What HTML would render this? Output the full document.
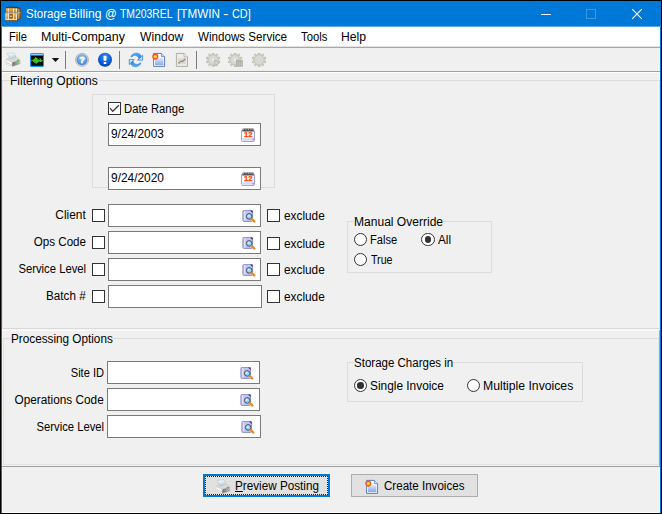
<!DOCTYPE html>
<html><head><meta charset="utf-8"><title>Storage Billing</title>
<style>
*{box-sizing:border-box;margin:0;padding:0}
html,body{width:662px;height:514px;overflow:hidden;background:#000}
body{font-family:"Liberation Sans",sans-serif;font-size:12px;color:#000;position:relative}
.a{position:absolute}
.t{position:absolute;white-space:nowrap;line-height:16px;height:16px;transform-origin:0 0}
.t.r{transform-origin:100% 0}
#win{left:1px;top:1px;width:660px;height:512px;background:#f0f0f0;border-left:1px solid #0078d7;border-right:1px solid #0078d7}
#title{left:1px;top:1px;width:660px;height:26px;background:#0078d7;border-bottom:1px solid #59a7e5}
#menu{left:2px;top:27px;width:658px;height:20px;background:#fff}
.inp{position:absolute;background:#fff;border:1px solid #7a7a7a;height:23px;width:153px}
.cb{position:absolute;width:13px;height:13px;border:1px solid #333;background:#fff}
.rb{position:absolute;width:13.6px;height:13.6px;border:1px solid #333;background:#fff;border-radius:50%}
.rb.on::after{content:"";position:absolute;left:2.6px;top:2.6px;width:6.4px;height:6.4px;border-radius:50%;background:#333}
.gb{position:absolute;border:1px solid #dcdcdc}
.btn{position:absolute;height:23px;background:#e1e1e1;border:1px solid #adadad}
/*FIT*/
#tt1{left:25.97px!important;top:6px!important;transform:scaleX(0.9586)}
#tt2{left:69.32px!important;top:6px!important;transform:scaleX(1.0131)}
#tt3{left:105.40px!important;top:6px!important;transform:scaleX(0.9674)}
#tt4{left:119.80px!important;top:6px!important;transform:scaleX(0.8661)}
#tt5{left:176.63px!important;top:6px!important;transform:scaleX(0.9746)}
#tt6{left:222.89px!important;top:6px!important;transform:scaleX(1.3973)}
#tt7{left:232.27px!important;top:6px!important;transform:scaleX(0.9077)}
#m1{left:8.89px!important;top:29px!important;transform:scaleX(0.9261)}
#m2{left:40.79px!important;top:29px!important;transform:scaleX(1.0396)}
#m3{left:139.90px!important;top:29px!important;transform:scaleX(1.0109)}
#m4{left:198.20px!important;top:29px!important;transform:scaleX(0.9678)}
#m5{left:301.20px!important;top:29px!important;transform:scaleX(0.9388)}
#m6{left:341.12px!important;top:29px!important;transform:scaleX(1.0145)}
#fo{left:9.72px!important;top:73px!important;transform:scaleX(1.0056)}
#dr{left:124.18px!important;top:101px!important;transform:scaleX(0.9397)}
#d1{left:110.61px!important;top:126px!important;transform:scaleX(0.9898)}
#d2{left:110.61px!important;top:170px!important;transform:scaleX(0.9927)}
#l1{right:576.59px!important;top:207px!important;transform:scaleX(0.9902)}
#l2{right:575.83px!important;top:234px!important;transform:scaleX(0.9676)}
#l3{right:576.13px!important;top:261px!important;transform:scaleX(0.9380)}
#l4{right:576.57px!important;top:288px!important;transform:scaleX(0.9747)}
#e1{left:284.23px!important;top:208px!important;transform:scaleX(0.9842)}
#e2{left:284.23px!important;top:236px!important;transform:scaleX(0.9842)}
#e3{left:284.23px!important;top:262px!important;transform:scaleX(0.9842)}
#e4{left:284.23px!important;top:289px!important;transform:scaleX(0.9842)}
#mo{left:354.13px!important;top:214px!important;transform:scaleX(1.0036)}
#rf{left:369.90px!important;top:232px!important;transform:scaleX(0.9240)}
#ra{left:437.90px!important;top:232px!important;transform:scaleX(0.9814)}
#rt{left:371.40px!important;top:252px!important;transform:scaleX(0.8860)}
#po{left:10.95px!important;top:331px!important;transform:scaleX(0.9783)}
#p1{right:558.13px!important;top:365px!important;transform:scaleX(0.9239)}
#p2{right:557.83px!important;top:392px!important;transform:scaleX(0.9841)}
#p3{right:558.04px!important;top:419px!important;transform:scaleX(0.9366)}
#sc{left:354.17px!important;top:355px!important;transform:scaleX(0.9601)}
#si{left:369.85px!important;top:378px!important;transform:scaleX(0.9892)}
#mi{left:482.91px!important;top:378px!important;transform:scaleX(1.0174)}
#b1{left:235.10px!important;top:478px!important;transform:scaleX(0.9757)}
#b2{left:384.03px!important;top:478px!important;transform:scaleX(0.9648)}
/*ENDFIT*/
</style></head><body>
<div class="a" id="win"></div>
<div class="a" style="left:2px;top:27px;width:2px;height:485px;background:#f5f2ef"></div>
<div class="a" style="left:658px;top:27px;width:2px;height:485px;background:#f5f2ef"></div>
<div class="a" style="left:2px;top:512px;width:658px;height:1px;background:#fdfdfd"></div>
<div class="a" id="title"></div>
<div class="t" id="tt1" style="left:26.7px;top:6px;color:#fff">Storage</div> <div class="t" id="tt2" style="left:70.2px;top:6px;color:#fff">Billing</div> <div class="t" id="tt3" style="left:104.8px;top:6px;color:#fff">@</div> <div class="t" id="tt4" style="left:120.2px;top:6px;color:#fff">TM203REL</div> <div class="t" id="tt5" style="left:177.3px;top:6px;color:#fff">[TMWIN</div> <div class="t" id="tt6" style="left:225.6px;top:6px;color:#fff">-</div> <div class="t" id="tt7" style="left:235.3px;top:6px;color:#fff">CD]</div>

<!-- shared svg defs -->
<svg width="0" height="0" style="position:absolute">
<defs>
<linearGradient id="gPaper" x1="0" y1="0" x2="0.3" y2="1"><stop offset="0.15" stop-color="#ffffff"/><stop offset="1" stop-color="#9ed0f4"/></linearGradient>
<linearGradient id="gPrR" x1="0" y1="0" x2="1" y2="0"><stop offset="0" stop-color="#6c6c6c"/><stop offset="1" stop-color="#c6c6c6"/></linearGradient>
<linearGradient id="gGold" x1="0" y1="0" x2="0" y2="1"><stop offset="0" stop-color="#f0c46a"/><stop offset="1" stop-color="#b87318"/></linearGradient>
<linearGradient id="gGold2" x1="0" y1="0" x2="0" y2="1"><stop offset="0" stop-color="#c88a2a"/><stop offset="1" stop-color="#8a5410"/></linearGradient>
<radialGradient id="gHelp" cx="0.5" cy="0.25" r="0.8"><stop offset="0" stop-color="#9fd0ff"/><stop offset="1" stop-color="#2f7fe0"/></radialGradient>
<radialGradient id="gInfo" cx="0.5" cy="0.3" r="0.75"><stop offset="0" stop-color="#3f92f6"/><stop offset="0.6" stop-color="#0a5ad2"/><stop offset="1" stop-color="#0642ae"/></radialGradient>
<linearGradient id="gDoc" x1="0" y1="0" x2="0" y2="1"><stop offset="0" stop-color="#dfe9fb"/><stop offset="1" stop-color="#86a6e6"/></linearGradient>
<linearGradient id="gRef" x1="0" y1="0" x2="0" y2="1"><stop offset="0" stop-color="#58b0ff"/><stop offset="1" stop-color="#1a72dc"/></linearGradient>
<g id="printer">
 <path d="M3.3 5.5 L9.8 4.8 L12.1 9 L6 11.2 Z" fill="url(#gPaper)" stroke="#bfbdac" stroke-width="0.6"/>
 <path d="M2 11.4 L5.2 9.9 L5.9 11.2 L12 9.1 L12.4 9.3 L16.3 11.7 L8.3 14.5 Z" fill="#dadada" stroke="#c4c1b0" stroke-width="0.5"/>
 <path d="M2 11.4 L8.3 14.5 L8.3 18.3 L2 16.4 Z" fill="#f6f6f6" stroke="#cfccbc" stroke-width="0.5"/>
 <path d="M2.5 14.3 L7.8 16.5 L7.8 17.3 L2.5 15.2 Z" fill="#c9c9c9"/>
 <path d="M8.3 14.5 L16.3 11.7 L16.3 15.5 L8.3 18.3 Z" fill="url(#gPrR)"/>
 <path d="M8.3 18.3 L16.3 15.5" stroke="#8a8a8a" stroke-width="0.6"/>
 <ellipse cx="13.9" cy="12.5" rx="1.2" ry="0.8" fill="#3fc41c"/>
</g>
<g id="search">
 <rect x="0.9" y="0.4" width="9.7" height="11" rx="1.2" fill="#c4c3ee" stroke="#8f8dd2" stroke-width="1"/>
 <path d="M2.7 1.2 V10.6" stroke="#e6e6fa" stroke-width="1"/>
 <path d="M8 0.4 H10 Q10.6 0.4 10.6 1.6 V3 Z" fill="#2c2c7c"/>
 <circle cx="7.2" cy="6.4" r="2.8" fill="#86daf8" stroke="#4c4c55" stroke-width="1"/>
 <circle cx="6.7" cy="5.8" r="1" fill="#d6f4ff"/>
 <path d="M9.7 9 L12.3 11.5" stroke="#ee8622" stroke-width="2.4" stroke-linecap="round"/>
</g>
<g id="cal">
 <rect x="0.6" y="2.2" width="12.8" height="11.2" rx="0.8" fill="#fff" stroke="#9a99d6" stroke-width="1"/>
 <path d="M1.8 0.6 H12.4 L13 3.4 H1.2 Z" fill="#55555c"/>
 <path d="M2.5 0.2 V2 M5 0.2 V2 M7.5 0.2 V2 M10 0.2 V2 M12 0.2 V2" stroke="#bdbdbd" stroke-width="0.8"/>
 <rect x="1.6" y="10.2" width="10.6" height="2.4" fill="#d5d7f6"/>
 <rect x="11.6" y="10.6" width="1.2" height="2" fill="#ee7040"/>
</g>
<g id="gear">
 <path d="M6.22,1.77 L6.40,-0.06 L7.80,-0.06 L7.98,1.77 L9.40,2.24 L10.63,0.85 L11.76,1.68 L10.82,3.27 L11.70,4.48 L13.51,4.08 L13.94,5.42 L12.25,6.15 L12.25,7.65 L13.94,8.38 L13.51,9.72 L11.70,9.32 L10.82,10.53 L11.76,12.12 L10.63,12.95 L9.40,11.56 L7.98,12.03 L7.80,13.86 L6.40,13.86 L6.22,12.03 L4.80,11.56 L3.57,12.95 L2.44,12.12 L3.38,10.53 L2.50,9.32 L0.69,9.72 L0.26,8.38 L1.95,7.65 L1.95,6.15 L0.26,5.42 L0.69,4.08 L2.50,4.48 L3.38,3.27 L2.44,1.68 L3.57,0.85 L4.80,2.24 Z" fill="#cfcfca" stroke="#b8b4a0" stroke-width="0.7" stroke-linejoin="round"/>
 <circle cx="7.1" cy="6.9" r="4.2" fill="#d9d9d5"/>
</g>
</defs>
</svg>

<!-- title icon: treasure chest -->
<svg class="a" style="left:4px;top:4px" width="20" height="20" viewBox="0 0 20 20"><g transform="translate(0,-0.35) scale(1,1.085)">
 <path d="M1.6 5.2 Q1.8 3.4 4 3.2 L13.6 3.5 Q16 3.8 16.6 6 L16.4 13.4 L12.9 15.6 L1.5 15.3 Z" fill="#6b4210" stroke="#4e300c" stroke-width="0.9" stroke-linejoin="round"/>
 <path d="M1.7 5 Q2 3.8 4 3.7 L13.4 4 Q12.8 4.2 12.8 5 Z" fill="#8a5a1a"/>
 <rect x="1.6" y="4.4" width="11.2" height="3.8" fill="url(#gGold)"/>
 <rect x="1.6" y="8.8" width="11.2" height="6.4" fill="url(#gGold)"/>
 <path d="M12.8 4.6 Q15.6 4.2 16.5 6.2 L16.5 7.6 L12.8 8.2 Z" fill="url(#gGold2)"/>
 <path d="M12.8 8.8 L16.5 8.2 L16.4 13.4 L12.8 15.4 Z" fill="url(#gGold2)"/>
 <path d="M1.4 8.5 H12.8 L16.6 7.9" stroke="#a9b3c0" stroke-width="0.9" fill="none"/>
 <path d="M4.3 4.4 V8 M9.5 4.4 V8 M12.4 4.4 V8" stroke="#f4f0e6" stroke-width="0.9"/>
 <path d="M1.9 8.9 V15 M4.4 8.9 V15 M9.3 8.9 V15 M12.4 8.9 V15.2" stroke="#f4f0e6" stroke-width="0.9"/>
 <path d="M1.6 14.8 H12.8" stroke="#f4f0e6" stroke-width="0.9"/>
 <rect x="5.4" y="9.6" width="3.3" height="3.7" fill="#8f5410"/>
 <rect x="5.9" y="11.1" width="2" height="0.9" fill="#fff"/>
 <path d="M14.6 4.9 V14.3" stroke="#d8c8a8" stroke-width="0.6" opacity="0.7"/>
</g></svg>
<!-- caption buttons -->
<div class="a" style="left:541px;top:14px;width:10px;height:1px;background:#fff"></div>
<div class="a" style="left:586px;top:9px;width:10px;height:10px;border:1px solid #3f97e1"></div>
<svg class="a" style="left:631px;top:8px" width="12" height="12" viewBox="0 0 12 12"><path d="M1.2 1.2 L10.8 10.8 M10.8 1.2 L1.2 10.8" stroke="#fff" stroke-width="1.1" fill="none"/></svg>

<!-- toolbar icons -->
<svg class="a" style="left:4px;top:48px" width="20" height="22" viewBox="0 0 20 22"><use href="#printer"/></svg>
<svg class="a" style="left:29px;top:52px" width="16" height="16" viewBox="0 0 16 16">
 <rect x="1" y="1" width="14" height="14" rx="1.6" fill="#1d92f8"/>
 <rect x="2" y="1.9" width="12" height="1.1" fill="#8ecbff"/>
 <rect x="2" y="3.8" width="12" height="10" fill="#050805"/>
 <path d="M2.2 8.7 L3.6 8.6 L4.2 7.6 L4.8 9.8 L5.4 6.6 L6 10.9 L6.6 5.2 L7.2 11.6 L7.8 6 L8.4 10.6 L9 7.4 L9.6 9.6 L10.2 8 L10.8 9.4 L11.3 6.6 L11.9 10 L12.5 8.2 L13.8 8.6" stroke="#4ade2a" stroke-width="0.8" fill="none" stroke-linejoin="round"/>
 <path d="M4.5 13.6 V11.6 M6.9 13.6 V12 M9.2 13.6 V11.8 M11.6 13.6 V12.2" stroke="#123c10" stroke-width="0.7"/>
</svg>
<svg class="a" style="left:51px;top:57px" width="9" height="6" viewBox="0 0 9 6"><path d="M0.8 1 H8.2 L4.5 5.1 Z" fill="#111"/></svg>
<div class="a" style="left:65px;top:51px;width:1px;height:18px;background:#7c7c7c"></div>
<svg class="a" style="left:74px;top:52px" width="16" height="16" viewBox="0 0 16 16">
 <circle cx="8" cy="7.8" r="6.5" fill="#d9d9d6" stroke="#a9a592" stroke-width="0.7"/>
 <circle cx="8" cy="7.8" r="5.1" fill="url(#gHelp)" stroke="#3b78c8" stroke-width="0.5"/>
 <text x="8" y="11" text-anchor="middle" font-family="Liberation Sans, sans-serif" font-weight="bold" font-size="9.2" fill="#fff" stroke="#fff" stroke-width="0.45">?</text>
</svg>
<svg class="a" style="left:97px;top:52px" width="16" height="16" viewBox="0 0 16 16">
 <circle cx="8" cy="7.8" r="7" fill="url(#gInfo)"/>
 <rect x="6.6" y="3.7" width="2.9" height="5.1" rx="0.7" fill="#fff"/>
 <rect x="6.7" y="9.9" width="2.7" height="2.1" rx="0.6" fill="#fff"/>
</svg>
<div class="a" style="left:119px;top:51px;width:1px;height:18px;background:#7c7c7c"></div>
<svg class="a" style="left:128px;top:52px" width="16" height="16" viewBox="0 0 16 16">
 <g id="rhalf"><path d="M2.8 4.7 C3.9 1.7 6.9 0.6 9.4 1 C11.4 1.4 12.6 2.5 13.4 4.2 L14.7 3 L14.7 8.3 L9.3 8.3 L10.9 6.7 C10.2 4.7 9 3.7 7.4 3.5 C5.8 3.3 4.7 3.9 3.9 5 Z" fill="url(#gRef)" stroke="#2a7fe0" stroke-width="0.4" stroke-linejoin="round"/>
 <path d="M14.1 4.4 L14.1 7.8 L10.6 7.8 Z" fill="#c6e7ff"/></g>
 <use href="#rhalf" transform="rotate(180 7.9 7.9)"/>
</svg>
<svg class="a" style="left:151px;top:52px" width="16" height="16" viewBox="0 0 16 16">
 <path d="M2.6 1.4 H10.4 L13.6 4.6 V14.4 H2.6 Z" fill="#fff" stroke="#5a7cc4" stroke-width="1"/>
 <path d="M10.4 1.4 V4.6 H13.6" fill="#dfe8fa" stroke="#5a7cc4" stroke-width="0.8"/>
 <rect x="4" y="6" width="8.4" height="7.2" fill="url(#gDoc)"/>
 <circle cx="4.3" cy="4.6" r="3.1" fill="#f4562c"/>
 <circle cx="4.3" cy="4.6" r="1.7" fill="#ffd83a"/>
</svg>
<svg class="a" style="left:174px;top:52px" width="16" height="16" viewBox="0 0 16 16">
 <path d="M2.4 1.4 H10 L13.5 4.8 V14.4 H2.4 Z" fill="#eeede8" stroke="#b0aea4" stroke-width="1"/>
 <rect x="4" y="6.2" width="8" height="6" fill="#dcdad3"/>
 <path d="M10 1.4 V4.8 H13.4" fill="#f2f1ec" stroke="#aeaca2" stroke-width="0.8"/>
 <path d="M4.3 11.4 L7 9.1 L8.6 9.5 L11.4 6.7" stroke="#8f8d86" stroke-width="1.3" fill="none"/>
 
</svg>
<div class="a" style="left:196px;top:51px;width:1px;height:18px;background:#7c7c7c"></div>
<svg class="a" style="left:205.5px;top:53px" width="16" height="14" viewBox="0 0 16 14"><use href="#gear"/><circle cx="7.1" cy="6.9" r="1.4" fill="#ececea"/><path d="M8.8 7 L13.4 9.8 L8.8 12.8 Z" fill="#dadad6" stroke="#a9a79c" stroke-width="0.7"/></svg>
<svg class="a" style="left:228px;top:53px" width="16" height="14" viewBox="0 0 16 14"><use href="#gear"/><circle cx="7.1" cy="6.9" r="1.4" fill="#ececea"/><rect x="8.4" y="7.2" width="6" height="6" fill="#c4c4c0" stroke="#a9a79c" stroke-width="0.7"/><path d="M10.4 7.2 V13.2 M12.4 7.2 V13.2 M8.4 9 H14.4" stroke="#a9a79c" stroke-width="0.6"/></svg>
<svg class="a" style="left:251.5px;top:53px" width="16" height="14" viewBox="0 0 16 14"><use href="#gear"/><circle cx="7.1" cy="6.9" r="1.3" fill="#f4f4f2" stroke="#b9b6a4" stroke-width="0.5"/></svg>
<div class="a" id="menu"></div>
<div class="t" id="m1" style="left:10px;top:29px">File</div>
<div class="t" id="m2" style="left:41px;top:29px">Multi-Company</div>
<div class="t" id="m3" style="left:140px;top:29px">Window</div>
<div class="t" id="m4" style="left:198px;top:29px">Windows Service</div>
<div class="t" id="m5" style="left:301px;top:29px">Tools</div>
<div class="t" id="m6" style="left:341px;top:29px">Help</div>
<div class="a" style="left:2px;top:46px;width:658px;height:1px;background:#e2e2e2"></div>
<div class="a" style="left:2px;top:47px;width:658px;height:1px;background:#a8a8a8"></div>
<div class="a" style="left:2px;top:71px;width:658px;height:1px;background:#a0a0a0"></div>
<div class="a" style="left:2px;top:72px;width:658px;height:1px;background:#fff"></div>

<!-- Filtering options -->
<div class="gb" style="left:2px;top:80px;width:658px;height:249px;border-color:#dcdcdc #e6e4e2 #d9d9d9 #e2e0de"></div>
<div class="t" id="fo" style="left:10px;top:73px;background:#f0f0f0">Filtering Options</div>
<div class="gb" style="left:92px;top:94px;width:183px;height:94px"></div>
<div class="cb" style="left:108px;top:102px"></div>
<div class="t" id="dr" style="left:125px;top:101px">Date Range</div>
<div class="inp" style="left:108px;top:123px"></div>
<div class="t" id="d1" style="left:111px;top:126px">9/24/2003</div>
<div class="inp" style="left:108px;top:167px"></div>
<div class="t" id="d2" style="left:111px;top:170px">9/24/2020</div>

<div class="t r" id="l1" style="right:576px;top:207px">Client</div>
<div class="t r" id="l2" style="right:576px;top:234px">Ops Code</div>
<div class="t r" id="l3" style="right:576px;top:261px">Service Level</div>
<div class="t r" id="l4" style="right:576px;top:288px">Batch #</div>
<div class="cb" style="left:92px;top:209px"></div>
<div class="cb" style="left:92px;top:236px"></div>
<div class="cb" style="left:92px;top:263px"></div>
<div class="cb" style="left:92px;top:290px"></div>
<div class="inp" style="left:108px;top:204px"></div>
<div class="inp" style="left:108px;top:231px"></div>
<div class="inp" style="left:108px;top:258px"></div>
<div class="inp" style="left:108px;top:285px;width:154px"></div>
<div class="cb" style="left:267px;top:209px"></div>
<div class="cb" style="left:267px;top:237px"></div>
<div class="cb" style="left:267px;top:263px"></div>
<div class="cb" style="left:267px;top:290px"></div>
<div class="t" id="e1" style="left:284px;top:207px">exclude</div>
<div class="t" id="e2" style="left:284px;top:235px">exclude</div>
<div class="t" id="e3" style="left:284px;top:261px">exclude</div>
<div class="t" id="e4" style="left:284px;top:288px">exclude</div>

<div class="gb" style="left:346.5px;top:221px;width:145px;height:52px"></div>
<div class="t" id="mo" style="left:355px;top:213px;background:#f0f0f0">Manual Override</div>
<div class="rb" style="left:353.9px;top:232.8px"></div>
<div class="t" id="rf" style="left:371px;top:232px">False</div>
<div class="rb on" style="left:421px;top:232.6px"></div>
<div class="t" id="ra" style="left:438px;top:232px">All</div>
<div class="rb" style="left:353.9px;top:252.8px"></div>
<div class="t" id="rt" style="left:371px;top:252px">True</div>

<!-- Processing options -->
<div class="a" style="left:2px;top:329px;width:658px;height:1px;background:#f6f6f6"></div>
<div class="a" style="left:2px;top:330px;width:658px;height:1px;background:#fafafa"></div>
<div class="gb" style="left:3px;top:338px;width:656px;height:127px;border-color:#dcdcdc #e2e2e2 #e2e2e2 #e2e2e2"></div>
<div class="a" style="left:659px;top:330px;width:1px;height:137px;background:#a8a8a8"></div>
<div class="t" id="po" style="left:11px;top:331px;background:#f0f0f0">Processing Options</div>
<div class="t r" id="p1" style="right:558px;top:365px">Site ID</div>
<div class="t r" id="p2" style="right:558px;top:392px">Operations Code</div>
<div class="t r" id="p3" style="right:558px;top:419px">Service Level</div>
<div class="inp" style="left:107px;top:361px"></div>
<div class="inp" style="left:107px;top:388px"></div>
<div class="inp" style="left:107px;top:415px;width:154px"></div>

<div class="gb" style="left:346.5px;top:362px;width:236.5px;height:40px"></div>
<div class="t" id="sc" style="left:355px;top:355px;background:#f0f0f0">Storage Charges in</div>
<div class="rb on" style="left:353.9px;top:378.7px"></div>
<div class="t" id="si" style="left:371px;top:378px">Single Invoice</div>
<div class="rb" style="left:466.6px;top:378.7px"></div>
<div class="t" id="mi" style="left:484px;top:378px">Multiple Invoices</div>

<!-- bottom -->
<div class="a" style="left:2px;top:466px;width:658px;height:1px;background:#a0a0a0"></div>
<div class="btn" style="left:203px;top:474px;width:127px;border:2px solid #0078d7"></div>
<div class="t" id="b1" style="left:235px;top:477px"><u>P</u>review Posting</div>
<div class="btn" style="left:351px;top:474px;width:127px"></div>
<div class="t" id="b2" style="left:385px;top:477px">Create Invoices</div>

<!-- checkmark -->
<svg class="a" style="left:108px;top:102px" width="13" height="13" viewBox="0 0 13 13"><path d="M2 6.2 L4.7 9.3 L10.9 3.3" stroke="#333" stroke-width="1.25" fill="none"/></svg>
<!-- calendar icons -->
<svg class="a" style="left:240.6px;top:127.8px" width="15" height="15" viewBox="0 0 15 15"><use href="#cal"/><text x="7.2" y="9.4" text-anchor="middle" font-family="Liberation Sans, sans-serif" font-weight="bold" font-size="6.4" fill="#ff4a12" stroke="#ff4a12" stroke-width="0.3" textLength="8.4" lengthAdjust="spacingAndGlyphs">12</text></svg>
<svg class="a" style="left:241px;top:172px" width="15" height="15" viewBox="0 0 15 15"><use href="#cal"/><text x="7.2" y="9.4" text-anchor="middle" font-family="Liberation Sans, sans-serif" font-weight="bold" font-size="6.4" fill="#ff4a12" stroke="#ff4a12" stroke-width="0.3" textLength="8.4" lengthAdjust="spacingAndGlyphs">12</text></svg>
<!-- search icons -->
<svg class="a" style="left:241.8px;top:210.4px" width="14" height="14" viewBox="0 0 14 14"><use href="#search"/></svg>
<svg class="a" style="left:241.8px;top:237.4px" width="14" height="14" viewBox="0 0 14 14"><use href="#search"/></svg>
<svg class="a" style="left:241.8px;top:264.4px" width="14" height="14" viewBox="0 0 14 14"><use href="#search"/></svg>
<svg class="a" style="left:240.4px;top:366.6px" width="14" height="14" viewBox="0 0 14 14"><use href="#search"/></svg>
<svg class="a" style="left:240.4px;top:393.6px" width="14" height="14" viewBox="0 0 14 14"><use href="#search"/></svg>
<svg class="a" style="left:241.4px;top:420.6px" width="14" height="14" viewBox="0 0 14 14"><use href="#search"/></svg>
<!-- button icons -->
<div class="a" style="left:205px;top:476px;width:123px;height:19px;border:1px dotted #222"></div>
<svg class="a" style="left:214px;top:474.5px" width="20" height="22" viewBox="0 0 20 22"><use href="#printer"/></svg>
<svg class="a" style="left:364px;top:478.5px" width="16" height="16" viewBox="0 0 16 16">
 <path d="M2.6 1.4 H10.4 L13.6 4.6 V14.4 H2.6 Z" fill="#fff" stroke="#5a7cc4" stroke-width="1"/>
 <path d="M10.4 1.4 V4.6 H13.6" fill="#dfe8fa" stroke="#5a7cc4" stroke-width="0.8"/>
 <rect x="4" y="6" width="8.4" height="7.2" fill="url(#gDoc)"/>
 <circle cx="4.3" cy="4.6" r="3.1" fill="#f4562c"/>
 <circle cx="4.3" cy="4.6" r="1.7" fill="#ffd83a"/>
</svg>
</body></html>
